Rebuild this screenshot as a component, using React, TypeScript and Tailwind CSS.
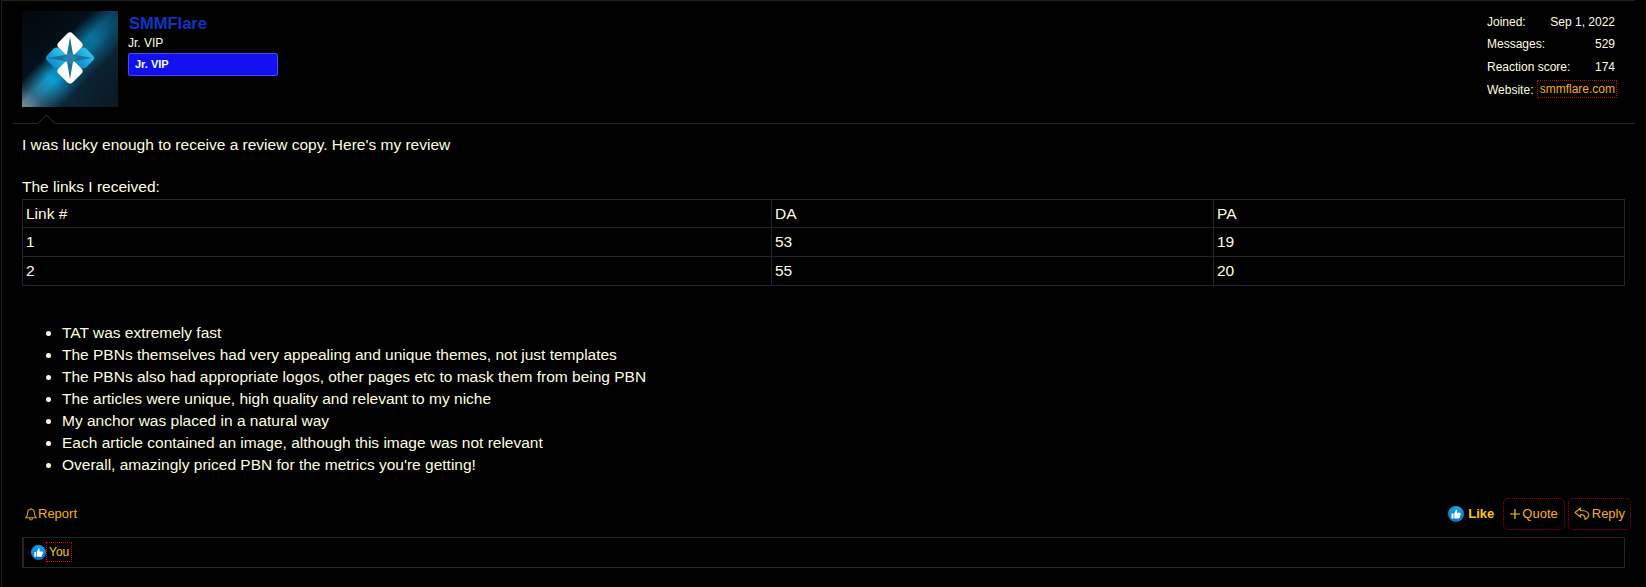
import React from "react";

const Avatar = () => (
  <svg width="96" height="96" viewBox="0 0 96 96" className="block shrink-0">
    <defs>
      <linearGradient id="bg" x1="0" y1="1" x2="1" y2="0">
        <stop offset="0" stopColor="#7a8a94" />
        <stop offset="0.13" stopColor="#2f6d8a" />
        <stop offset="0.3" stopColor="#0a9ed2" />
        <stop offset="0.5" stopColor="#0a5f85" />
        <stop offset="0.72" stopColor="#0a7099" />
        <stop offset="1" stopColor="#0a3a52" />
      </linearGradient>
      <linearGradient id="mask" x1="0" y1="0" x2="1" y2="1">
        <stop offset="0" stopColor="#03070d" />
        <stop offset="0.36" stopColor="#03070d" stopOpacity="0.92" />
        <stop offset="0.48" stopColor="#03070d" stopOpacity="0" />
        <stop offset="0.54" stopColor="#0b1a28" stopOpacity="0" />
        <stop offset="0.7" stopColor="#0b1a28" stopOpacity="0.9" />
        <stop offset="1" stopColor="#0d1622" />
      </linearGradient>
      <linearGradient id="blue" x1="0" y1="0" x2="0" y2="1">
        <stop offset="0" stopColor="#2cc4f0" />
        <stop offset="1" stopColor="#0a8cc8" />
      </linearGradient>
    </defs>
    <rect width="96" height="96" fill="url(#bg)" />
    <rect width="96" height="96" fill="url(#mask)" />
    <rect x="26" y="38.500" width="17" height="17" rx="4" transform="rotate(45 34.500 47)" fill="url(#blue)" />
    <rect x="53" y="38.500" width="17" height="17" rx="4" transform="rotate(45 61.500 47)" fill="url(#blue)" />
    <rect x="38" y="24" width="20" height="20" rx="4" transform="rotate(45 48 34)" fill="#ffffff" />
    <rect x="38" y="50" width="20" height="20" rx="4" transform="rotate(45 48 60)" fill="#ffffff" />
    <path d="M48 26 L51 43.500 L70 47 L51 50.500 L48 68 L45 50.500 L26 47 L45 43.500 Z" fill="#1d6f98" />
    <path d="M40 47 L48 41 L56 47 L48 53 Z" fill="#2383ad" />
  </svg>
);

const Thumb = ({ id, size }: { id: string; size: number }) => (
  <svg width={size} height={size} viewBox="0 0 16 16" className="shrink-0">
    <defs>
      <linearGradient id={id} x1="0" y1="0" x2="0" y2="1">
        <stop offset="0" stopColor="#18a3f0" />
        <stop offset="1" stopColor="#0a6fc4" />
      </linearGradient>
    </defs>
    <circle cx="8" cy="8" r="8" fill={`url(#${id})`} />
    <path d="M3.500 7.500h2v5h-2z M6.300 7.500 L8 3.500 Q9.500 3.500 9.300 5 L9 6.800 H12 Q13 7 12.600 8.200 L11.700 11.800 Q11.500 12.500 10.700 12.500 H6.300 Z" fill="#fff" />
  </svg>
);

const Bell = () => (
  <svg width="12" height="14" viewBox="0 0 13 15" fill="none" stroke="#d9a200" strokeWidth="1.100" className="shrink-0">
    <path d="M1 11.500 Q2.800 9.500 2.800 6.500 Q2.800 2.300 6.500 2.300 Q10.200 2.300 10.200 6.500 Q10.200 9.500 12 11.500 Z M6.500 2.300V1 M5 12 Q5 14 6.500 14 Q8 14 8 12" />
  </svg>
);

const PlusIcon = () => (
  <svg width="10" height="10" viewBox="0 0 10 10" fill="none" stroke="#ffc800" strokeWidth="1.200" className="shrink-0">
    <path d="M5 0V10 M0 5H10" />
  </svg>
);

const ReplyIcon = () => (
  <svg width="16" height="14" viewBox="0 0 16 14" fill="none" stroke="#d9a200" strokeWidth="1.200" className="shrink-0">
    <path d="M6.500 1 L1 5.500 L6.500 10 V7.500 Q11.500 7.500 11 12.500 Q15 10.500 14.700 7.500 Q14.300 3.500 6.500 3.500 Z" strokeLinejoin="round" />
  </svg>
);

const rows = [
  ["Link #", "DA", "PA"],
  ["1", "53", "19"],
  ["2", "55", "20"],
];

const items = [
  "TAT was extremely fast",
  "The PBNs themselves had very appealing and unique themes, not just templates",
  "The PBNs also had appropriate logos, other pages etc to mask them from being PBN",
  "The articles were unique, high quality and relevant to my niche",
  "My anchor was placed in a natural way",
  "Each article contained an image, although this image was not relevant",
  "Overall, amazingly priced PBN for the metrics you're getting!",
];

const stats = [
  ["Joined:", "Sep 1, 2022"],
  ["Messages:", "529"],
  ["Reaction score:", "174"],
];

export default function App() {
  return (
    <div className="w-[1646px] h-[587px] overflow-hidden bg-black font-['Liberation_Sans',Arial,sans-serif] text-[#ffffe0]">
      <div className="w-[1634px] h-[587px] ml-px border-l border-t border-[#1f1f1f] pl-[10px]">
        <header className="relative h-[123px] border-b border-[#242424] flex justify-between pt-[10px] pl-[10px] pr-[20px]">
          <div className="flex">
            <Avatar />
            <div className="ml-[10px] pt-[2px]">
              <div className="pl-px text-[16.500px] leading-[20px] font-bold text-[#0a36c8]">SMMFlare</div>
              <div className="mt-[2px] text-[12px] leading-[17px]">Jr. VIP</div>
              <div className="mt-[1px] w-[150px] h-[23px] rounded-[2px] border border-[#4a4ae8] bg-[#1010f0] pl-[6px] text-[11px] leading-[20px] font-bold text-white">Jr. VIP</div>
            </div>
          </div>
          <div className="pt-[3.500px] text-[12px] w-[128px]">
            {stats.map(([a, b]) => (
              <div key={a} className="flex justify-between h-[22.700px] leading-[15px]">
                <span>{a}</span>
                <span>{b}</span>
              </div>
            ))}
            <div className="flex justify-between items-start leading-[15px]">
              <span>Website:</span>
              <span className="-mt-[2.600px] -mr-[2px] border border-dotted border-[#d00000] pl-[2px] pr-[1px] pt-px text-[#f5b400]">smmflare.com</span>
            </div>
          </div>
          <div className="absolute left-[24px] -bottom-px w-[20px] h-[10px] overflow-hidden">
            <div className="w-[13px] h-[13px] mt-[3px] ml-[3.500px] rotate-45 border-l border-t border-[#242424] bg-black" />
          </div>
        </header>

        <div className="pt-[10px] pl-[10px] text-[15.500px] leading-[21.900px]">
          <div>I was lucky enough to receive a review copy. Here's my review</div>
          <div className="h-[20px]" />
          <div className="mb-px">The links I received:</div>
          <table className="w-[1603px] border-collapse table-fixed">
            <colgroup>
              <col className="w-[749px]" />
              <col className="w-[442px]" />
              <col />
            </colgroup>
            <tbody>
              {rows.map((r) => (
                <tr key={r[0]} className="h-[28.600px]">
                  {r.map((c) => (
                    <td key={c} className="border border-[#242424] px-[3px] py-0">{c}</td>
                  ))}
                </tr>
              ))}
            </tbody>
          </table>
          <ul className="mt-[36.500px] pl-[40px] list-disc">
            {items.map((t) => (
              <li key={t}>{t}</li>
            ))}
          </ul>
        </div>

        <footer className="mt-[22.500px] h-[32px] w-[1619px] flex items-center justify-between text-[13px] text-[#f5b400]">
          <div className="flex items-center gap-[1px] pl-[13px]">
            <Bell />
            <span className="-mt-px">Report</span>
          </div>
          <div className="flex items-center">
            <div className="flex items-center gap-[4px] font-bold mr-[9px] text-[#ffc800]">
              <Thumb id="t1" size={16} />
              <span>Like</span>
            </div>
            <div className="flex items-center gap-[2px] h-[32px] px-[6px] border border-dotted border-[#a00010] rounded-[5px]">
              <PlusIcon />
              <span>Quote</span>
            </div>
            <div className="flex items-center gap-[2px] h-[32px] ml-[3px] px-[5px] border border-dotted border-[#a00010] rounded-[5px]">
              <ReplyIcon />
              <span>Reply</span>
            </div>
          </div>
        </footer>

        <div className="mt-[7px] ml-[10px] w-[1603px] h-[31px] flex items-center border border-l-2 border-[#242424] pl-[7px] text-[12px] text-[#ffc800]">
          <Thumb id="t2" size={15} />
          <span className="border border-dotted border-[#e00000] px-[2px] h-[20px] leading-[18px]">You</span>
        </div>
      </div>
    </div>
  );
}
